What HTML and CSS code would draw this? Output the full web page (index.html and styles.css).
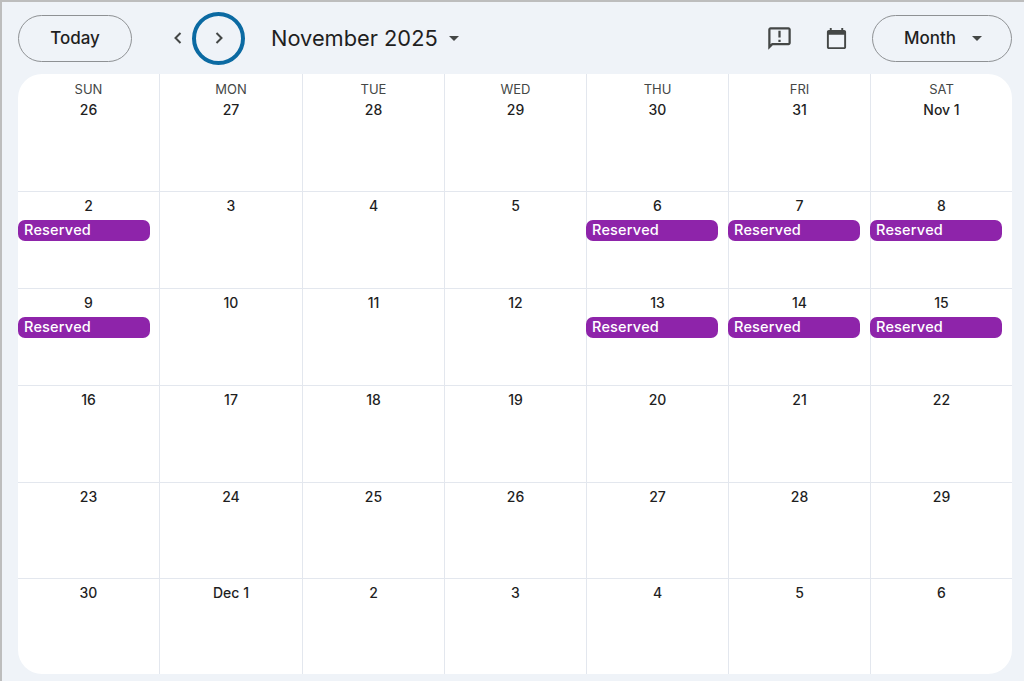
FILE: index.html
```html
<!DOCTYPE html>
<html lang="en">
<head>
<meta charset="utf-8">
<title>Calendar</title>
<link rel="stylesheet" href="styles.css">
</head>
<body>
<div class="app">
  <header class="toolbar">
    <button class="pill today">Today</button>
    <div class="nav">
      <svg class="chev" viewBox="0 0 24 24"><path d="M15 6l-6 6 6 6" /></svg>
      <span class="focus"><svg class="chev" viewBox="0 0 24 24"><path d="M9 6l6 6-6 6" /></svg></span>
    </div>
    <div class="title">November 2025<span class="caret"></span></div>
    <div class="spacer"></div>
    <svg class="icon feedback" viewBox="0 0 24 24"><path d="M20 2H4c-1.1 0-2 .9-2 2v18l4-4h14c1.1 0 2-.9 2-2V4c0-1.100-.9-2-2-2zm0 14H5.200L4 17.200V4h16v12zM11 5h2v6h-2zm0 8h2v2h-2z"/></svg>
    <svg class="icon cal" viewBox="0 0 24 24"><path d="M20 3h-1V1h-2v2H7V1H5v2H4c-1.100 0-2 .9-2 2v16c0 1.100.9 2 2 2h16c1.100 0 2-.9 2-2V5c0-1.100-.9-2-2-2zm0 18H4V8h16v13z"/></svg>
    <button class="pill month">Month<span class="caret small"></span></button>
  </header>
  <main class="grid">
    <div class="cell"><div class="dow">SUN</div><div class="num">26</div></div>
    <div class="cell"><div class="dow">MON</div><div class="num">27</div></div>
    <div class="cell"><div class="dow">TUE</div><div class="num">28</div></div>
    <div class="cell"><div class="dow">WED</div><div class="num">29</div></div>
    <div class="cell"><div class="dow">THU</div><div class="num">30</div></div>
    <div class="cell"><div class="dow">FRI</div><div class="num">31</div></div>
    <div class="cell"><div class="dow">SAT</div><div class="num">Nov 1</div></div>

    <div class="cell"><div class="num">2</div><div class="event">Reserved</div></div>
    <div class="cell"><div class="num">3</div></div>
    <div class="cell"><div class="num">4</div></div>
    <div class="cell"><div class="num">5</div></div>
    <div class="cell"><div class="num">6</div><div class="event">Reserved</div></div>
    <div class="cell"><div class="num">7</div><div class="event">Reserved</div></div>
    <div class="cell"><div class="num">8</div><div class="event">Reserved</div></div>

    <div class="cell"><div class="num">9</div><div class="event">Reserved</div></div>
    <div class="cell"><div class="num">10</div></div>
    <div class="cell"><div class="num">11</div></div>
    <div class="cell"><div class="num">12</div></div>
    <div class="cell"><div class="num">13</div><div class="event">Reserved</div></div>
    <div class="cell"><div class="num">14</div><div class="event">Reserved</div></div>
    <div class="cell"><div class="num">15</div><div class="event">Reserved</div></div>

    <div class="cell"><div class="num">16</div></div>
    <div class="cell"><div class="num">17</div></div>
    <div class="cell"><div class="num">18</div></div>
    <div class="cell"><div class="num">19</div></div>
    <div class="cell"><div class="num">20</div></div>
    <div class="cell"><div class="num">21</div></div>
    <div class="cell"><div class="num">22</div></div>

    <div class="cell"><div class="num">23</div></div>
    <div class="cell"><div class="num">24</div></div>
    <div class="cell"><div class="num">25</div></div>
    <div class="cell"><div class="num">26</div></div>
    <div class="cell"><div class="num">27</div></div>
    <div class="cell"><div class="num">28</div></div>
    <div class="cell"><div class="num">29</div></div>

    <div class="cell"><div class="num">30</div></div>
    <div class="cell"><div class="num">Dec 1</div></div>
    <div class="cell"><div class="num">2</div></div>
    <div class="cell"><div class="num">3</div></div>
    <div class="cell"><div class="num">4</div></div>
    <div class="cell"><div class="num">5</div></div>
    <div class="cell"><div class="num">6</div></div>
  </main>
</div>
</body>
</html>
```
FILE: styles.css
```css
* { box-sizing: border-box; }
html, body { margin: 0; height: 100%; overflow: hidden; }
body { font-family: Inter, Roboto, sans-serif; color: #1f1f1f; }
.app {
  width: 1024px; height: 681px;
  background: #eff3f8;
  border-top: 2px solid #bdbdbd;
  border-left: 2px solid #bdbdbd;
  padding: 12px 12px 7px 16px;
  display: flex; flex-direction: column;
}
.toolbar { display: flex; align-items: center; height: 48px; margin-bottom: 12px; flex: none; }
.pill {
  font: 500 17px Inter, Roboto, sans-serif; color: #1f1f1f;
  background: transparent;
  border: 1px solid #8e9194; border-radius: 24px;
  height: 47px; padding: 0;
}
.today { width: 114px; }
.nav { display: flex; align-items: center; margin-left: 36px; }
.chev { width: 20px; height: 20px; fill: none; stroke: #444746; stroke-width: 2.400; display: block; }
.focus {
  width: 53px; height: 53px; border: 4px solid #0b6aa2; border-radius: 50%;
  display: flex; align-items: center; justify-content: center;
  margin-left: 4px;
}
.title { font-size: 21.800px; margin-left: 26px; display: flex; align-items: center; }
.caret { width: 0; height: 0; border: 5.500px solid transparent; border-top: 5.500px solid #444746; border-bottom: 0; margin-left: 11px; margin-top: 1px; }
.caret.small { border-width: 5px 5px 0; margin-left: 16px; }
.spacer { flex: 1; }
.icon { fill: #444746; display: block; }
.feedback { width: 27px; height: 27px; margin-right: 32px; }
.cal { width: 23px; height: 23px; margin-right: 24px; }
.month { width: 140px; display: flex; align-items: center; justify-content: center; padding-left: 2px; }
.grid {
  flex: 1; background: #fff; border-radius: 24px; overflow: hidden;
  display: grid;
  grid-template-columns: 142px 143px 142px 142px 142px 142px 141px;
  grid-template-rows: 118px 97px 97px 97px 96px 95px;
}
.cell {
  border-right: 1px solid #e3e7ee; border-bottom: 1px solid #e3e7ee;
  display: flex; flex-direction: column; align-items: center;
  padding-top: 4px;
}
.cell:nth-child(-n+7) { padding-top: 7px; }
.cell:nth-child(7n) { border-right: 0; }
.cell:nth-last-child(-n+7) { border-bottom: 0; }
.dow { font-size: 13px; line-height: 17px; color: #444746; font-weight: 400; }
.num { font-size: 14px; line-height: 20px; font-weight: 500; color: #1f1f1f; }
.dow + .num { margin-top: 2px; }
.event {
  align-self: flex-start; width: 132px; height: 21px; margin-top: 4px;
  background: #8e24aa; color: #fff; border-radius: 7px;
  font-size: 14.500px; letter-spacing: .2px; font-weight: 500; line-height: 19px; padding-left: 6px;
}
.cell:not(:nth-child(7n+1)) .event { margin-left: -1px; }
```
